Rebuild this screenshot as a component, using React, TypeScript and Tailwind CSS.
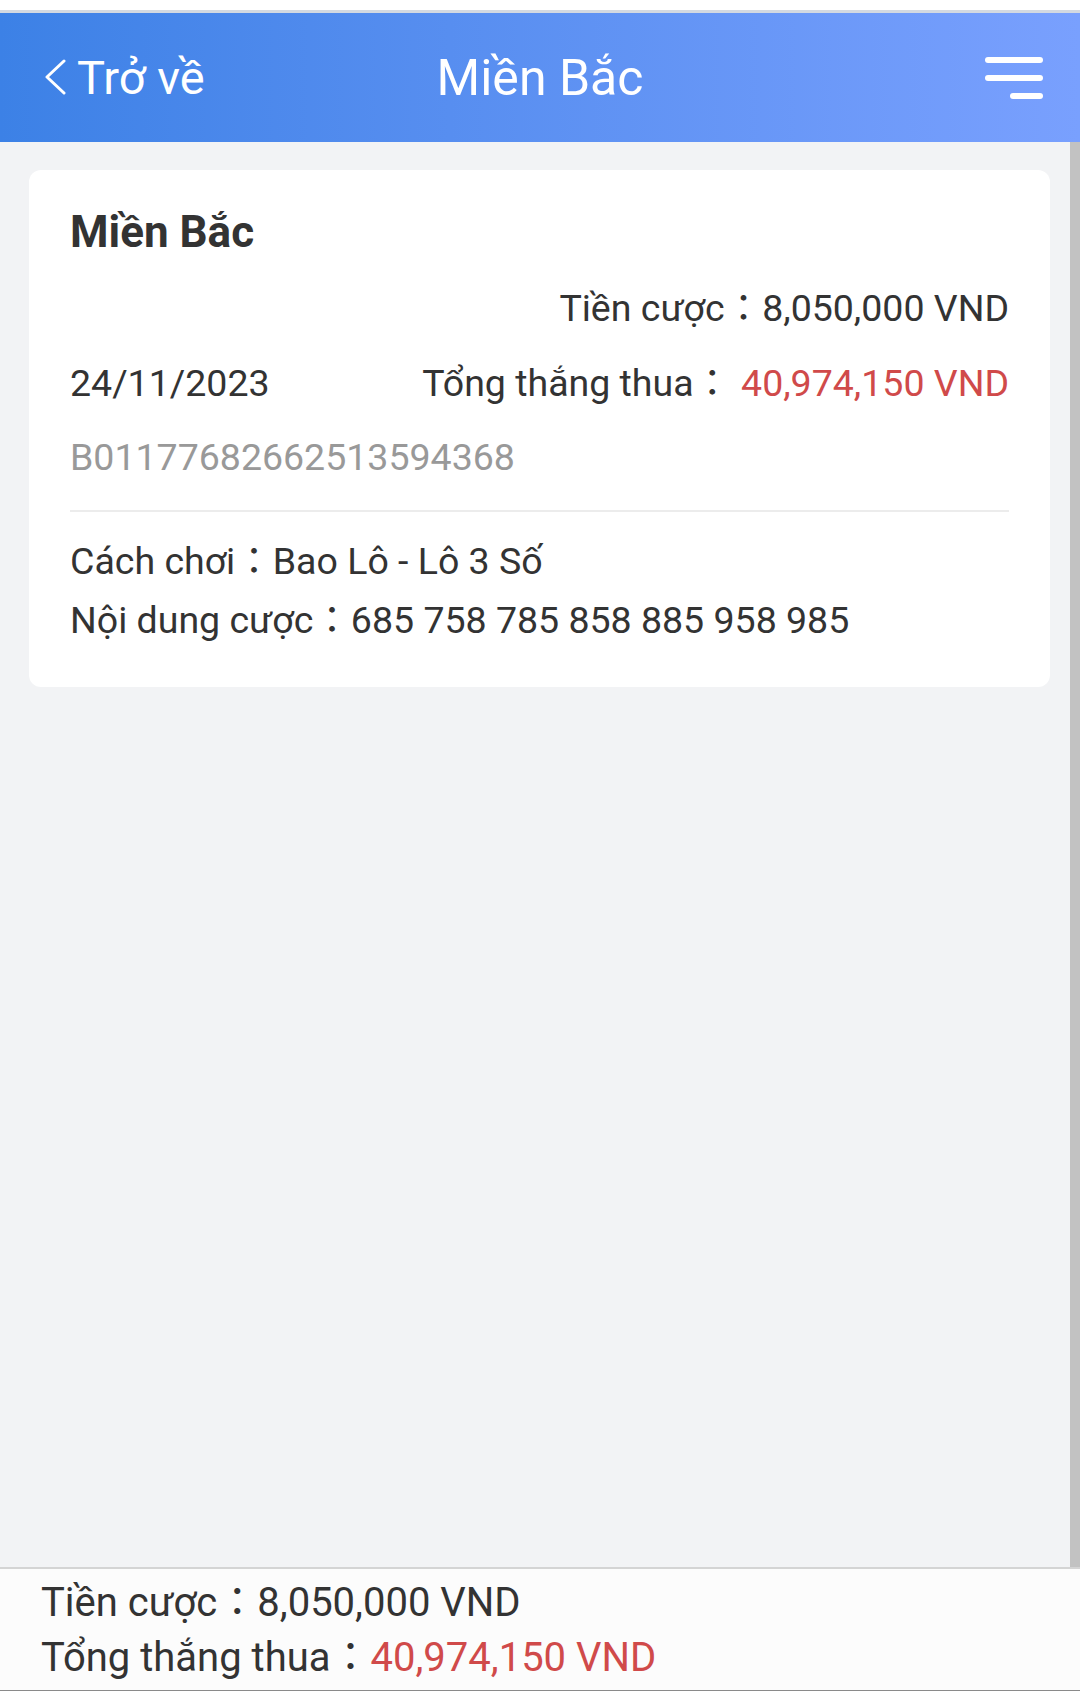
import React from "react";

const font = { fontFamily: 'Roboto, "Noto Sans CJK TC", sans-serif' };

export default function App() {
  return (
    <div className="w-[1080px] h-[1691px] flex flex-col bg-[#f2f3f5] overflow-hidden" style={font}>
      <div className="h-[10px] bg-white shrink-0" />
      <div className="h-[3px] bg-[#d3d9e1] shrink-0" />
      <header className="h-[129px] shrink-0 bg-gradient-to-r from-[#3c81e6] to-[#79a0fe] flex items-center justify-between relative text-white">
        <div className="flex items-center pl-[43px]">
          <svg width="24" height="36" viewBox="0 0 24 36" className="mr-[10px] mt-[-2px]">
            <path d="M21 2 L4 18 L21 34" fill="none" stroke="white" strokeWidth="3" strokeLinecap="round" strokeLinejoin="round" />
          </svg>
          <span className="text-[47px] leading-none">Trở về</span>
        </div>
        <div className="absolute left-0 right-0 text-center text-[50px] leading-none pointer-events-none">Miền Bắc</div>
        <div className="pr-[37px] flex flex-col items-end gap-[12px]">
          <div className="w-[58px] h-[6px] rounded-full bg-white" />
          <div className="w-[58px] h-[6px] rounded-full bg-white" />
          <div className="w-[33px] h-[6px] rounded-full bg-white" />
        </div>
      </header>
      <main className="flex-1 relative pt-[28px] px-[29px]">
        <div className="absolute right-0 top-0 bottom-0 w-[10px] bg-[#c2c2c2]" />
        <div className="w-[1021px] bg-white rounded-[12px] px-[41px] pt-[24px] pb-[37px] text-[#333] text-[37.5px]">
          <div className="h-[76px] flex items-center text-[44px] font-bold">Miền Bắc</div>
          <div className="h-[76px] flex items-center justify-end">
            <span>Tiền cược</span>
            <span>：</span>
            <span>8,050,000 VND</span>
          </div>
          <div className="h-[74px] flex items-center justify-between">
            <span>24/11/2023</span>
            <span className="flex items-center">
              <span>Tổng thắng thua</span>
              <span>：</span>
              <span className="ml-[10px] text-[#d04a4a]">40,974,150 VND</span>
            </span>
          </div>
          <div className="h-[74px] flex items-center text-[#999]">B01177682662513594368</div>
          <div className="mt-[16px] h-[2px] bg-[#ececec]" />
          <div className="mt-[20px] leading-[59px]">
            <div>Cách chơi：Bao Lô - Lô 3 Số</div>
            <div>Nội dung cược：685 758 785 858 885 958 985</div>
          </div>
        </div>
      </main>
      <footer className="shrink-0 border-t-2 border-[#d4d4d4] bg-[#fcfcfc] pt-[6px] pb-[5px] pl-[41px] text-[40px] leading-[55px] text-[#333]">
        <div>Tiền cược：8,050,000 VND</div>
        <div>
          Tổng thắng thua：<span className="text-[#d04a4a]">40,974,150 VND</span>
        </div>
      </footer>
      <div className="h-[1px] bg-[#8a8a8a] shrink-0" />
    </div>
  );
}
